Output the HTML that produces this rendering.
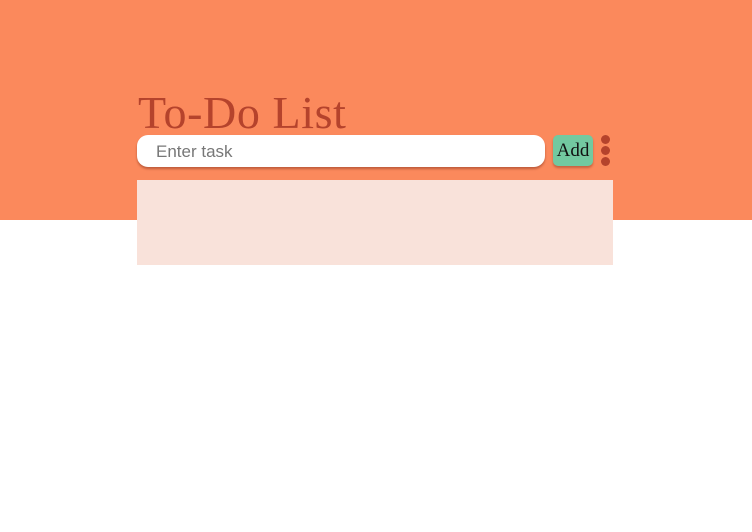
<!DOCTYPE html>
<html><head><style>
body{margin:0;width:752px;height:532px;background:#fff;position:relative;overflow:hidden;font-family:"Liberation Sans",sans-serif}
.top{position:absolute;left:0;top:0;width:752px;height:220px;background:#fb895c}
h1{position:absolute;left:138px;top:90px;margin:0;font:400 46px/1 "Liberation Serif",serif;color:#b5432c;letter-spacing:0.6px}
.inp{position:absolute;left:137px;top:135px;width:408px;height:32px;background:#fff;border-radius:11px;box-shadow:0 2px 2px rgba(120,40,20,.45)}
.inp span{position:absolute;left:19px;top:7px;font-size:17px;color:#777}
.btn{position:absolute;left:553px;top:135px;width:40px;height:31px;background:#72c9a0;border-radius:5px;box-shadow:0 2px 2px rgba(120,40,20,.4);font:400 19px/31px "Liberation Serif",serif;color:#111;text-align:center}
.dot{position:absolute;left:601px;width:9px;height:9px;border-radius:50%;background:#b5432c}
.panel{position:absolute;left:137px;top:180px;width:476px;height:85px;background:#f9e2da}
</style></head><body>
<div class="top"></div>
<h1>To-Do List</h1>
<div class="inp"><span>Enter task</span></div>
<div class="btn">Add</div>
<div class="dot" style="top:135px"></div>
<div class="dot" style="top:146px"></div>
<div class="dot" style="top:157px"></div>
<div class="panel"></div>
</body></html>
